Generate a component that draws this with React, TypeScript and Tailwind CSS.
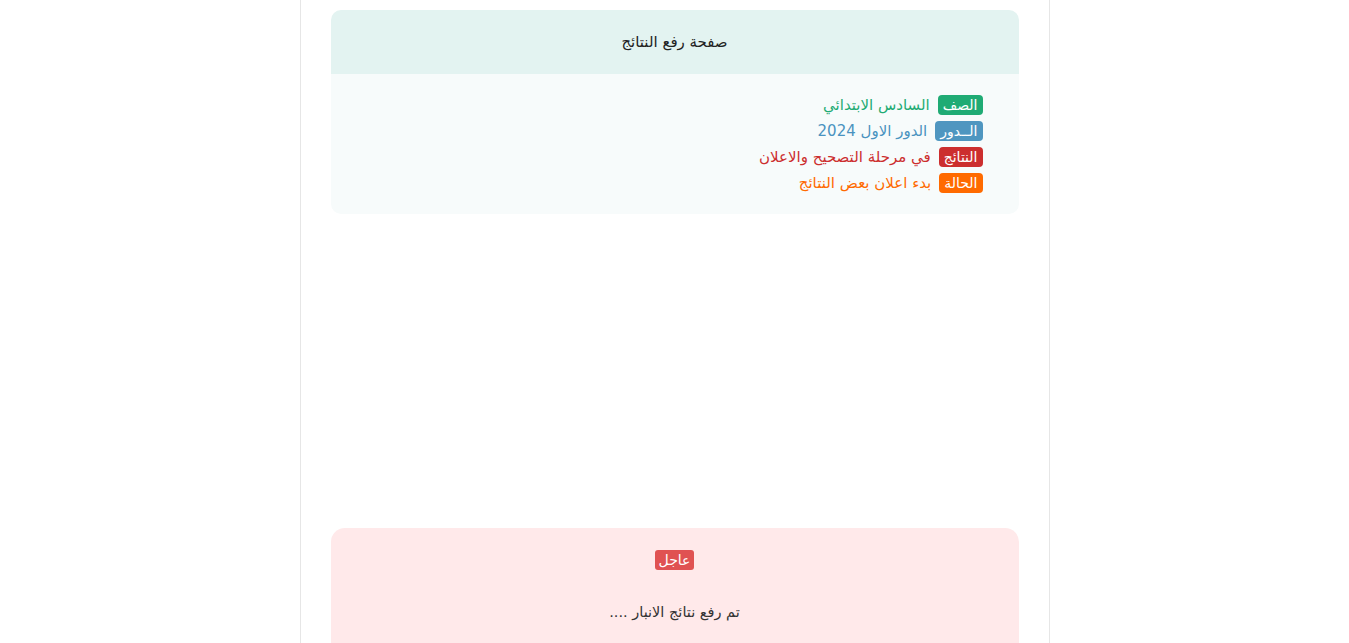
export default function App() {
  const rows = [
    { label: 'الصف', value: 'السادس الابتدائي', badge: 'bg-[#1fab74]', text: 'text-[#1fab74]' },
    { label: 'الــدور', value: 'الدور الاول 2024', badge: 'bg-[#4f96c0]', text: 'text-[#4a93c0]' },
    { label: 'النتائج', value: 'في مرحلة التصحيح والاعلان', badge: 'bg-[#cc2e2e]', text: 'text-[#cc2e2e]' },
    { label: 'الحالة', value: 'بدء اعلان بعض النتائج', badge: 'bg-[#ff6a00]', text: 'text-[#ff6a00]' },
  ];

  return (
    <div dir="rtl" className="min-h-screen bg-white font-['DejaVu_Sans',sans-serif]">
      <div className="mx-auto min-h-screen w-[750px] border-x border-[#e6e6e6] px-[30px] pt-[10px]">
        {/* Results card */}
        <div className="overflow-hidden rounded-[10px]">
          <div className="flex h-[64px] items-center justify-center bg-[#e3f3f1] text-[15px] text-[#222]">
            صفحة رفع النتائج
          </div>
          <div className="bg-[#f7fbfb] pb-[18px] pr-[36px] pt-[18px]">
            {rows.map((r) => (
              <div key={r.label} className="flex h-[26px] items-center gap-[8px]">
                <span className={`rounded-[4px] px-[5px] text-[14px] leading-[20px] text-white ${r.badge}`}>
                  {r.label}
                </span>
                <span className={`text-[15px] ${r.text}`}>{r.value}</span>
              </div>
            ))}
          </div>
        </div>

        {/* Empty slot */}
        <div className="h-[314px]" />

        {/* Urgent news */}
        <div className="rounded-t-[14px] bg-[#ffe9ea] pb-[20px] pt-[22px] text-center">
          <div className="flex justify-center">
            <span className="rounded-[3px] bg-[#e05252] px-[4px] text-[14px] leading-[20px] text-white">
              عاجل
            </span>
          </div>
          <p className="mt-[31px] text-[14.5px] leading-[22px] text-[#333]">تم رفع نتائج الانبار ....</p>
        </div>
      </div>
    </div>
  );
}
